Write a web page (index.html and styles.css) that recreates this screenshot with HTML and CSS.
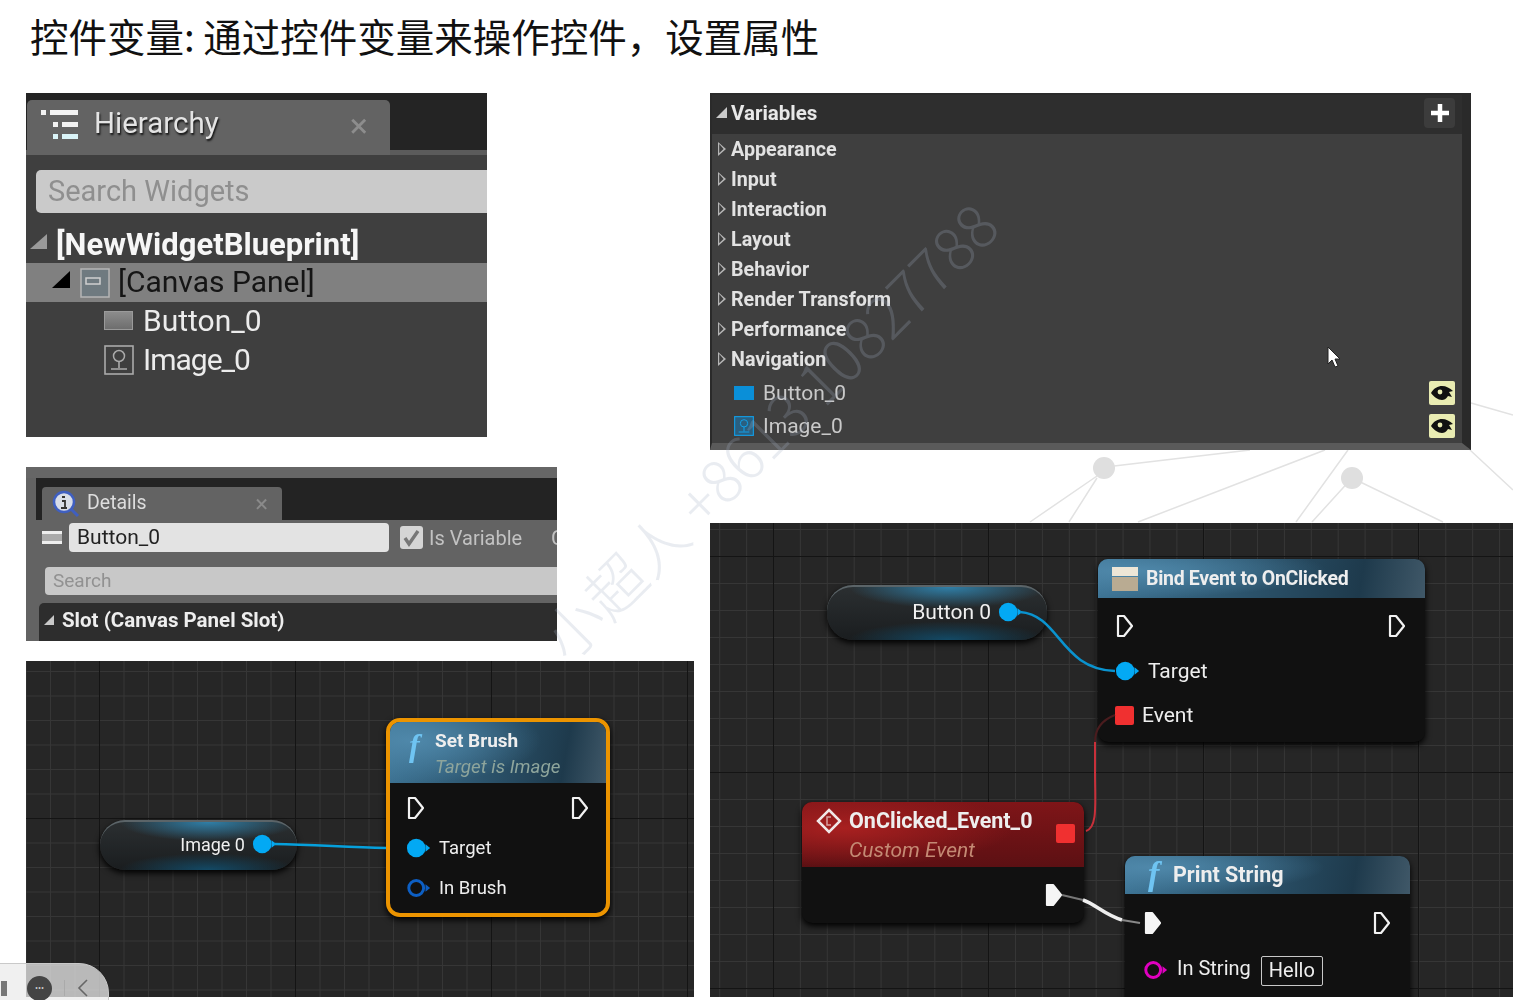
FILE: index.html
```html
<!DOCTYPE html>
<html lang="en">

<head>
    <meta charset="UTF-8">
    <meta name="viewport" content="width=device-width, initial-scale=1.0">
    <title>控件变量</title>
    <link rel="stylesheet" href="styles.css">
</head>

<body>
    <svg class="defs" width="0" height="0">
        <symbol id="exec" viewBox="0 0 20 24">
            <path d="M3 2h6l8 10-8 10H3z" fill="none" stroke="#f2f2f2" stroke-width="2.2" stroke-linejoin="round" />
        </symbol>
        <symbol id="exec-on" viewBox="0 0 20 24">
            <path d="M3 2h6l8 10-8 10H3z" fill="#f5f5f5" stroke="#f5f5f5" stroke-width="2.2" stroke-linejoin="round" />
        </symbol>
        <symbol id="pin-on" viewBox="0 0 28 22">
            <circle cx="11" cy="11" r="10" fill="#03a9f4" />
            <path d="M21 7l5 4-5 4z" fill="#03a9f4" />
        </symbol>
        <symbol id="eye" viewBox="0 0 26 24">
            <rect width="26" height="24" rx="2" fill="#e9ecb2" />
            <path d="M2 12c3-5 7-7 11-7s8 2 11 5l-4 1 3 5-4-1c-2 3-4 4-6 4-4 0-8-3-11-7z" fill="#111" />
            <circle cx="11" cy="11" r="2.4" fill="#e9ecb2" />
        </symbol>
        <symbol id="img-icon" viewBox="0 0 30 30">
            <rect x="1" y="1" width="28" height="28" fill="none" stroke="currentColor" stroke-width="1.6" />
            <circle cx="15" cy="11" r="5.5" fill="none" stroke="currentColor" stroke-width="1.5" />
            <path d="M15 16v7M7 24h16" stroke="currentColor" stroke-width="1.6" fill="none" />
        </symbol>
    </svg>

    <div class="slide">
        <h1 class="slide-title">控件变量: 通过控件变量来操作控件，设置属性</h1>

        <svg class="backdrop" width="1513" height="1000">
            <g stroke="#e2e2e2" stroke-width="1.5" fill="none">
                <path d="M1114 466L1250 450M1097 476L1030 522M1097 478L1069 522M1325 450L1138 522" />
                <path d="M1348 450L1296 522M1352 478L1312 522M1352 478L1443 522M1471 403L1513 415M1470 450L1513 490" />
            </g>
            <circle cx="1104" cy="468" r="11" fill="#dfdfdf" />
            <circle cx="1352" cy="478" r="11" fill="#dfdfdf" />
        </svg>

        <div class="columns">
            <div class="col-left">
                <section class="hierarchy">
                    <div class="tab-strip">
                        <div class="tab">
                            <svg class="tab-icon" width="40" height="34" viewBox="0 0 40 34">
                                <g fill="#f2f2f2">
                                    <rect x="1" y="2" width="5" height="5" />
                                    <rect x="10" y="2" width="28" height="5" />
                                    <rect x="13" y="14" width="5" height="5" />
                                    <rect x="22" y="14" width="16" height="5" />
                                </g>
                                <g fill="#d9f3f7">
                                    <rect x="13" y="26" width="5" height="5" />
                                    <rect x="22" y="26" width="16" height="5" />
                                </g>
                            </svg>
                            <span class="tab-name">Hierarchy</span>
                            <span class="tab-close">×</span>
                        </div>
                    </div>
                    <div class="search-wrap">
                        <div class="search-widgets">Search Widgets</div>
                    </div>
                    <div class="tree-root"><i class="tri tri-grey"></i><span>[NewWidgetBlueprint]</span></div>
                    <div class="tree-canvas">
                        <i class="tri tri-black"></i>
                        <svg class="canvas-icon" width="30" height="30" viewBox="0 0 30 30">
                            <rect x="1" y="1" width="28" height="28" fill="#6f7a80" stroke="#b5b5b5" stroke-width="1.5" />
                            <rect x="6" y="10" width="14" height="6" fill="none" stroke="#cfcfcf" stroke-width="1.5" />
                        </svg>
                        <span>[Canvas Panel]</span>
                    </div>
                    <div class="tree-leaf"><span class="btn-icon"></span><span>Button_0</span></div>
                    <div class="tree-leaf">
                        <svg class="leaf-icon" width="30" height="30"><use href="#img-icon" /></svg>
                        <span class="leaf-image">Image_0</span>
                    </div>
                </section>

                <section class="details">
                    <div class="details-top"></div>
                    <div class="details-strip">
                        <div class="details-tab">
                            <svg width="28" height="28" viewBox="0 0 28 28">
                                <circle cx="12" cy="12" r="10" fill="#d8dde8" stroke="#3f5fc0" stroke-width="2.5" />
                                <path d="M19 19l7 7" stroke="#3f5fc0" stroke-width="3" />
                                <path d="M10 7h3M10 11h3v7M9 18h6" stroke="#333" stroke-width="1.8" fill="none" />
                            </svg>
                            <span class="details-name">Details</span>
                            <span class="details-close">×</span>
                        </div>
                    </div>
                    <div class="name-row">
                        <span class="name-icon"></span>
                        <div class="name-input">Button_0</div>
                        <span class="checkbox">
                            <svg width="23" height="23" viewBox="0 0 23 23">
                                <path d="M5 12l4 6 9-13" stroke="#777" stroke-width="3.4" fill="none" />
                            </svg>
                        </span>
                        <span class="is-var">Is Variable</span>
                        <span class="cut-label">C</span>
                    </div>
                    <div class="details-search">Search</div>
                    <div class="slot-head"><i class="tri tri-light"></i><span>Slot (Canvas Panel Slot)</span></div>
                </section>

                <section class="graph graph-small">
                    <svg class="wires" width="668" height="336">
                        <path d="M248 183C290 184 320 186 360 187" stroke="#06a0dc" stroke-width="2.5" fill="none" />
                    </svg>

                    <div class="pill pill-image">
                        <span>Image 0</span>
                        <svg width="26" height="22"><use href="#pin-on" /></svg>
                    </div>

                    <div class="node node-brush">
                        <div class="node-head head-blue head-tall">
                            <span class="func">f</span>
                            <div>
                                <div class="node-title">Set Brush</div>
                                <div class="node-sub">Target is Image</div>
                            </div>
                        </div>
                        <div class="node-row row-split">
                            <svg width="20" height="24"><use href="#exec" /></svg>
                            <svg width="20" height="24"><use href="#exec" /></svg>
                        </div>
                        <div class="node-row">
                            <svg width="26" height="22"><use href="#pin-on" /></svg>
                            <span>Target</span>
                        </div>
                        <div class="node-row">
                            <svg width="26" height="22" viewBox="0 0 28 22">
                                <circle cx="11" cy="11" r="8" fill="none" stroke="#0d5fc4" stroke-width="3.2" />
                                <path d="M21 7l5 4-5 4z" fill="#0d5fc4" />
                            </svg>
                            <span>In Brush</span>
                        </div>
                    </div>
                </section>
            </div>

            <div class="col-right">
                <section class="vars">
                    <div class="vars-head">
                        <i class="tri tri-white"></i>
                        <span class="vars-title">Variables</span>
                        <span class="add-btn">
                            <svg width="20" height="20" viewBox="0 0 20 20">
                                <path d="M10 1v18M1 10h18" stroke="#fff" stroke-width="4.5" />
                            </svg>
                        </span>
                    </div>
                    <div class="cat"><i class="tri-open"></i>Appearance</div>
                    <div class="cat"><i class="tri-open"></i>Input</div>
                    <div class="cat"><i class="tri-open"></i>Interaction</div>
                    <div class="cat"><i class="tri-open"></i>Layout</div>
                    <div class="cat"><i class="tri-open"></i>Behavior</div>
                    <div class="cat"><i class="tri-open"></i>Render Transform</div>
                    <div class="cat"><i class="tri-open"></i>Performance</div>
                    <div class="cat"><i class="tri-open"></i>Navigation</div>
                    <div class="var-row var-first">
                        <span class="var-btn"></span>
                        <span class="var-name">Button_0</span>
                        <svg width="26" height="24"><use href="#eye" /></svg>
                    </div>
                    <div class="var-row">
                        <svg class="var-img" width="20" height="20"><use href="#img-icon" /></svg>
                        <span class="var-name">Image_0</span>
                        <svg width="26" height="24"><use href="#eye" /></svg>
                    </div>
                    <svg class="cursor" width="14" height="22" viewBox="0 0 14 22">
                        <path d="M1 1v17l4-4 3 7 3-1-3-7h5z" fill="#fff" stroke="#222" stroke-width="1" />
                    </svg>
                </section>

                <section class="graph graph-big">
                    <svg class="wires" width="803" height="474" fill="none">
                        <path d="M310 89C350 92 350 146 405 148" stroke="#0a93cf" stroke-width="2.5" />
                        <path d="M376 308C388 304 385 280 385 250C385 235 385 226 385 219" stroke="#c8303a" stroke-width="2" />
                        <path d="M385 219C385 205 392 197 405 192" stroke="#4a1c1e" stroke-width="2" />
                        <path d="M352 372L373 377" stroke="#777" stroke-width="2" />
                        <path d="M373 377C385 381 395 392 412 397" stroke="#eee" stroke-width="3.5" />
                        <path d="M412 397L430 400" stroke="#888" stroke-width="2" />
                    </svg>

                    <div class="pill pill-button">
                        <span>Button 0</span>
                        <svg width="26" height="22"><use href="#pin-on" /></svg>
                    </div>

                    <div class="node node-bind">
                        <div class="node-head head-blue head-bind">
                            <svg width="26" height="24" viewBox="0 0 26 24">
                                <rect width="26" height="9" fill="#eee6d6" />
                                <rect y="10" width="26" height="14" fill="#b9ab92" />
                            </svg>
                            <div class="node-title">Bind Event to OnClicked</div>
                        </div>
                        <div class="node-row row-split">
                            <svg width="20" height="24"><use href="#exec" /></svg>
                            <svg width="20" height="24"><use href="#exec" /></svg>
                        </div>
                        <div class="node-row">
                            <svg width="26" height="22"><use href="#pin-on" /></svg>
                            <span>Target</span>
                        </div>
                        <div class="node-row">
                            <span class="pin-square"></span>
                            <span>Event</span>
                        </div>
                    </div>

                    <div class="node node-click">
                        <div class="node-head head-red">
                            <svg class="diamond" width="26" height="26" viewBox="0 0 26 26">
                                <path d="M13 2l11 11-11 11L2 13z" fill="none" stroke="#f0e6e6" stroke-width="2.5" />
                                <path d="M15 9h-4v8h4" fill="none" stroke="#d9a0a0" stroke-width="1.5" />
                            </svg>
                            <div>
                                <div class="node-title">OnClicked_Event_0</div>
                                <div class="node-sub sub-red">Custom Event</div>
                            </div>
                            <span class="pin-square pin-out"></span>
                        </div>
                        <div class="click-foot">
                            <svg width="20" height="24"><use href="#exec-on" /></svg>
                        </div>
                    </div>

                    <div class="node node-print">
                        <div class="node-head head-blue head-print">
                            <span class="func">f</span>
                            <div class="node-title">Print String</div>
                        </div>
                        <div class="node-row row-split">
                            <svg width="20" height="24"><use href="#exec-on" /></svg>
                            <svg width="20" height="24"><use href="#exec" /></svg>
                        </div>
                        <div class="node-row">
                            <svg width="26" height="22" viewBox="0 0 28 22">
                                <circle cx="11" cy="11" r="8" fill="none" stroke="#e000c0" stroke-width="3.2" />
                                <path d="M21 7l5 4-5 4z" fill="#e000c0" />
                            </svg>
                            <span class="in-string">In String</span>
                            <span class="hello">Hello</span>
                        </div>
                    </div>
                </section>
            </div>
        </div>

        <div class="watermark">小超人 +8613 10827788</div>

        <div class="player">
            <span class="player-bit"></span>
            <span class="player-more">•••</span>
            <span class="player-sep"></span>
            <svg width="12" height="18" viewBox="0 0 12 18">
                <path d="M10 1L2 9l8 8" fill="none" stroke="#666" stroke-width="1.6" />
            </svg>
        </div>
    </div>
</body>

</html>
```

FILE: styles.css
```css
* {
    box-sizing: border-box;
}

body {
    margin: 0;
    background-color: #fff;
    font-family: Roboto, 'Noto Sans', sans-serif;
}

.defs {
    position: absolute;
}

.slide {
    position: relative;
    width: 1513px;
    height: 1000px;
    overflow: hidden;
}

.slide-title {
    margin: 0;
    padding-left: 30px;
    height: 93px;
    font-family: 'Noto Sans CJK SC', sans-serif;
    font-size: 38.5px;
    font-weight: 400;
    line-height: 70px;
    color: #111;
    white-space: nowrap;
}

.backdrop {
    position: absolute;
    left: 0;
    top: 0;
}

.columns {
    position: relative;
    display: grid;
    grid-template-columns: 684px 803px;
    padding-left: 26px;
}

.col-left,
.col-right {
    display: flex;
    flex-direction: column;
    align-items: flex-start;
}

/* triangles */
.tri {
    display: block;
    width: 0;
    height: 0;
    flex: none;
}

.tri-grey {
    border-left: 17px solid transparent;
    border-bottom: 15px solid #9a9a9a;
    margin: 0 9px 6px 2px;
}

.tri-black {
    border-left: 18px solid transparent;
    border-bottom: 17px solid #000;
    margin: 0 10px 4px 0;
}

.tri-light {
    border-left: 10px solid transparent;
    border-bottom: 10px solid #c8c8c8;
    margin-right: 8px;
}

.tri-white {
    border-left: 11px solid transparent;
    border-bottom: 11px solid #c9c9c9;
    margin-right: 4px;
}

.tri-open {
    display: block;
    width: 8px;
    height: 14px;
    margin-right: 5px;
    background: #b5b5b5;
    clip-path: polygon(0 0, 100% 50%, 0 100%, 0 88%, 70% 50%, 15% 15%, 15% 85%, 0 100%);
    flex: none;
}

/* hierarchy panel */
.hierarchy {
    width: 461px;
    height: 344px;
    background-color: #3f3f3f;
    color: #eee;
    filter: blur(0.5px);
    overflow: hidden;
}

.tab-strip {
    height: 62px;
    padding: 7px 0 0 1px;
    background: linear-gradient(#242424 57px, #5b5b5b 57px);
}

.tab {
    display: flex;
    align-items: center;
    width: 363px;
    height: 55px;
    padding: 0 22px 6px 13px;
    background-color: #636363;
    border-radius: 5px 5px 0 0;
}

.tab-name {
    margin: 0 0 4px 14px;
    font-size: 29.5px;
    color: #e4e4e4;
    text-shadow: 1px 2px 2px #111;
}

.tab-close {
    margin-left: auto;
    font-size: 34px;
    color: #8d8d8d;
}

.search-wrap {
    padding: 15px 0 0 10px;
}

.search-widgets {
    height: 43px;
    padding-left: 12px;
    background-color: #cacaca;
    border-radius: 5px 0 0 5px;
    font-size: 29px;
    line-height: 43px;
    color: #8f8f8f;
}

.tree-root {
    display: flex;
    align-items: center;
    height: 50px;
    padding: 12px 0 0 2px;
    font-size: 31px;
    font-weight: 700;
    color: #f6f6f6;
}

.tree-canvas {
    display: flex;
    align-items: center;
    height: 39px;
    padding: 0 0 2px 26px;
    background-color: #808080;
    font-size: 30px;
    white-space: nowrap;
    color: #151515;
}

.canvas-icon {
    flex: none;
    margin: 2px 8px 0 0;
}

.tree-leaf {
    display: flex;
    align-items: center;
    height: 39px;
    padding: 0 0 2px 78px;
    font-size: 30px;
    color: #ececec;
}

.btn-icon {
    width: 29px;
    height: 19px;
    margin-right: 10px;
    background: linear-gradient(#8c8c8c, #6e6e6e);
    border: 1px solid #9a9a9a;
}

.leaf-icon {
    flex: none;
    margin-right: 9px;
    color: #aaa;
}

.leaf-image {
    letter-spacing: -1px;
}

/* details panel */
.details {
    width: 531px;
    height: 174px;
    margin-top: 30px;
    background-color: #636363;
    filter: blur(0.5px);
    overflow: hidden;
}

.details-top {
    height: 11px;
    background-color: #666;
}

.details-strip {
    height: 42px;
    padding: 9px 0 0 16px;
    margin-left: 10px;
    background-color: #232323;
}

.details-tab {
    display: flex;
    align-items: center;
    width: 240px;
    height: 33px;
    margin-left: -10px;
    padding: 0 14px 0 10px;
    background-color: #636363;
    border-radius: 4px 4px 0 0;
}

.details-name {
    margin: 0 0 3px 7px;
    font-size: 19.5px;
    color: #ddd;
}

.details-close {
    margin-left: auto;
    font-size: 24px;
    color: #8a8a8a;
}

.name-row {
    display: flex;
    align-items: center;
    height: 29px;
    margin-top: 3px;
    padding-left: 16px;
    white-space: nowrap;
}

.name-icon {
    flex: none;
    width: 20px;
    height: 13px;
    margin-right: 7px;
    background: linear-gradient(#eee 25%, #aaa 25%, #aaa 75%, #eee 75%);
}

.name-input {
    flex: none;
    width: 320px;
    height: 29px;
    padding-left: 8px;
    background-color: #e3e3e3;
    border-radius: 4px;
    font-size: 21px;
    line-height: 28px;
    color: #222;
}

.checkbox {
    flex: none;
    width: 23px;
    height: 23px;
    margin-left: 11px;
    background-color: #d5d5d5;
    border-radius: 3px;
}

.is-var {
    margin-left: 6px;
    font-size: 20px;
    color: #c2c2c2;
}

.cut-label {
    margin-left: 29px;
    font-size: 21px;
    color: #c2c2c2;
}

.details-search {
    width: 512px;
    height: 28px;
    margin: 15px 0 0 19px;
    padding-left: 8px;
    background-color: #c8c8c8;
    border-radius: 4px 0 0 4px;
    font-size: 19px;
    line-height: 28px;
    color: #919191;
}

.slot-head {
    display: flex;
    align-items: center;
    height: 38px;
    margin: 8px 0 0 13px;
    padding: 0 0 4px 5px;
    background-color: #2d2d2d;
    border-radius: 5px 0 0 0;
    font-size: 20.5px;
    font-weight: 700;
    color: #eee;
}

/* graphs */
.graph {
    position: relative;
    background-color: #262626;
    overflow: hidden;
    filter: blur(0.4px);
}

.graph-small {
    width: 668px;
    height: 336px;
    margin-top: 20px;
    background-image:
        linear-gradient(90deg, #141414 1.5px, transparent 1.5px),
        linear-gradient(#141414 1.5px, transparent 1.5px),
        linear-gradient(90deg, #363636 1px, transparent 1px),
        linear-gradient(#363636 1px, transparent 1px);
    background-size: 196px 196px, 196px 196px, 24.5px 24.5px, 24.5px 24.5px;
    background-position: 73px 0, 0 157px, 73px 0, 0 157px;
}

.graph-big {
    width: 803px;
    height: 474px;
    margin-top: 73px;
    background-image:
        linear-gradient(90deg, #141414 1.5px, transparent 1.5px),
        linear-gradient(#141414 1.5px, transparent 1.5px),
        linear-gradient(90deg, #363636 1px, transparent 1px),
        linear-gradient(#363636 1px, transparent 1px);
    background-size: 215px 216px, 215px 216px, 26.9px 27px, 26.9px 27px;
    background-position: 63px 33px, 63px 33px, 63px 33px, 63px 33px;
}

.wires {
    position: absolute;
    left: 0;
    top: 0;
    z-index: 4;
}

.pill {
    position: absolute;
    display: flex;
    align-items: center;
    justify-content: flex-end;
    padding-bottom: 4px;
    border-radius: 26px;
    border-top: 2px solid #5b6468;
    color: #f0f0f0;
    background:
        radial-gradient(ellipse 45% 40% at 55% 0, #2f7fa8, transparent),
        radial-gradient(ellipse 45% 35% at 55% 100%, #134a66, transparent),
        linear-gradient(#2b2f31, #1a1d1f);
    box-shadow: 0 3px 6px #000;
    z-index: 3;
}

.pill svg {
    margin-left: 7px;
}

.pill-image {
    left: 74px;
    top: 159px;
    width: 197px;
    height: 50px;
    padding-right: 19px;
    font-size: 18px;
}

.pill-button {
    left: 117px;
    top: 62px;
    width: 220px;
    height: 55px;
    padding-right: 23px;
    font-size: 21px;
}

.node {
    position: absolute;
    display: flex;
    flex-direction: column;
    background-color: #111;
    border-radius: 10px;
    color: #eee;
    box-shadow: 0 3px 6px #000;
    overflow: hidden;
    z-index: 3;
}

.node-head {
    display: flex;
    flex: none;
}

.head-blue {
    background:
        radial-gradient(ellipse 60% 70% at 10% 30%, #4f88aa, transparent),
        linear-gradient(100deg, #3e7596, #1e3a4c 80%, #405868);
}

.node-title {
    font-weight: 700;
    white-space: nowrap;
}

.node-sub {
    font-style: italic;
    color: #8ea59c;
    white-space: nowrap;
}

.sub-red {
    color: #c48a74;
}

.func {
    font-family: 'Liberation Serif', serif;
    font-style: italic;
    font-weight: 700;
    color: #6fc4f2;
    line-height: 1;
}

.node-row {
    display: flex;
    align-items: center;
}

.row-split {
    justify-content: space-between;
}

.pin-square {
    width: 19px;
    height: 19px;
    background-color: #f03030;
    border-radius: 2px;
    flex: none;
}

/* set brush */
.node-brush {
    left: 360px;
    top: 57px;
    width: 224px;
    height: 199px;
    border: 4px solid #ec9400;
    border-radius: 14px;
    font-size: 18.5px;
}

.head-tall {
    height: 61px;
    padding: 7px 0 0 19px;
    align-items: flex-start;
}

.head-tall .func {
    width: 26px;
    font-size: 32px;
}

.head-tall .node-title {
    font-size: 19px;
    line-height: 24px;
}

.head-tall .node-sub {
    margin-top: 2px;
    font-size: 18.8px;
    line-height: 24px;
}

.node-brush .node-row {
    height: 40px;
    padding: 0 16px;
}

.node-brush .node-row:nth-child(2) {
    margin-top: 5px;
}

.node-brush .node-row span {
    margin-left: 7px;
}

/* bind event */
.node-bind {
    left: 388px;
    top: 36px;
    width: 327px;
    height: 183px;
    font-size: 21px;
}

.head-bind {
    height: 39px;
    align-items: center;
    padding-left: 14px;
}

.head-bind .node-title {
    margin-left: 8px;
    font-size: 19.5px;
    letter-spacing: -0.3px;
}

.node-bind .node-row {
    height: 44px;
    padding: 0 18px 0 17px;
}

.node-bind .node-row:nth-child(2) {
    margin-top: 6px;
}

.node-bind .node-row:nth-child(3) {
    margin-top: 1px;
}

.node-bind .node-row span + span {
    margin-left: 8px;
}

.node-bind .node-row svg + span {
    margin-left: 7px;
}

/* clicked event */
.node-click {
    left: 92px;
    top: 279px;
    width: 282px;
    height: 121px;
}

.head-red {
    height: 65px;
    padding: 6px 0 0 14px;
    background:
        radial-gradient(ellipse 60% 60% at 15% 40%, #a82020, transparent),
        linear-gradient(#7f1518, #5c1013);
}

.diamond {
    margin-right: 7px;
}

.head-red .node-title {
    font-size: 21.5px;
    line-height: 26px;
}

.head-red .node-sub {
    margin-top: 3px;
    font-size: 21px;
    line-height: 26px;
}

.pin-out {
    margin: 16px 9px 0 auto;
}

.click-foot {
    display: flex;
    justify-content: flex-end;
    padding: 16px 20px 0 0;
}

/* print string */
.node-print {
    left: 415px;
    top: 333px;
    width: 285px;
    height: 160px;
    border-radius: 10px 10px 0 0;
    font-size: 20px;
}

.head-print {
    height: 38px;
    padding: 0 0 2px 23px;
    align-items: center;
}

.head-print .func {
    width: 25px;
    font-size: 34px;
}

.head-print .node-title {
    font-size: 21.5px;
}

.node-print .node-row {
    height: 44px;
    padding: 0 18px;
}

.node-print .node-row:nth-child(2) {
    height: 50px;
    margin-top: 4px;
}

.in-string {
    margin: 0 0 4px 8px;
}

.hello {
    margin: 2px 0 0 10px;
    padding: 0 7px;
    height: 30px;
    border: 1.5px solid #c8c8c8;
    border-radius: 2px;
    line-height: 27px;
}

/* variables */
.vars {
    position: relative;
    width: 761px;
    height: 357px;
    background-color: #3f3f3f;
    border-top: 2px solid #2a2a2a;
    border-right: 9px solid #2a2a2a;
    border-bottom: 7px solid #5a5a5a;
    border-left: 2px solid #2a2a2a;
    color: #e2e2e2;
    font-size: 19.7px;
    filter: blur(0.4px);
    overflow: hidden;
}

.vars-head {
    display: flex;
    align-items: center;
    height: 39px;
    padding: 0 0 4px 4px;
    background-color: #2e2e2e;
}

.vars-title {
    font-size: 20.5px;
    font-weight: 700;
    color: #e8e8e8;
}

.add-btn {
    display: flex;
    align-items: center;
    justify-content: center;
    width: 31px;
    height: 30px;
    margin: 0 7px 0 auto;
    background-color: #3c3c3c;
    border-radius: 4px;
}

.cat {
    display: flex;
    align-items: center;
    height: 30px;
    padding-left: 6px;
    font-weight: 700;
    white-space: nowrap;
}

.var-row {
    display: flex;
    align-items: center;
    height: 33.5px;
    padding: 0 7px 0 22px;
    font-size: 21px;
    font-weight: 400;
}

.var-first {
    margin-top: 2px;
}

.var-btn {
    width: 20px;
    height: 14px;
    background-color: #0a8fd8;
}

.var-img {
    color: #12a0e8;
    background-color: #2a5f80;
}

.var-name {
    margin-left: 9px;
    margin-right: auto;
    color: #c9c9c9;
}

.cursor {
    position: absolute;
    left: 615px;
    top: 251px;
}

/* overlays */
.watermark {
    position: absolute;
    left: 433px;
    top: 392px;
    width: 670px;
    font-size: 59px;
    font-family: 'Noto Sans CJK SC', sans-serif;
    font-weight: 300;
    line-height: 76px;
    text-align: center;
    white-space: nowrap;
    color: rgba(165, 175, 195, 0.24);
    transform: rotate(-45deg);
    pointer-events: none;
}

.player {
    position: absolute;
    left: -20px;
    top: 963px;
    display: flex;
    align-items: center;
    width: 129px;
    height: 50px;
    padding-left: 20px;
    background-color: rgba(235, 235, 235, 0.75);
    border: 1px solid #c9c9c9;
    border-radius: 0 30px 0 0;
}

.player-bit {
    width: 6px;
    height: 15px;
    background-color: #777;
}

.player-more {
    width: 25px;
    height: 25px;
    margin-left: 20px;
    background-color: #444;
    border-radius: 50%;
    font-size: 9px;
    line-height: 25px;
    text-align: center;
    color: #ccc;
}

.player-sep {
    width: 1px;
    height: 16px;
    margin: 0 12px;
    background-color: #aaa;
}
```
